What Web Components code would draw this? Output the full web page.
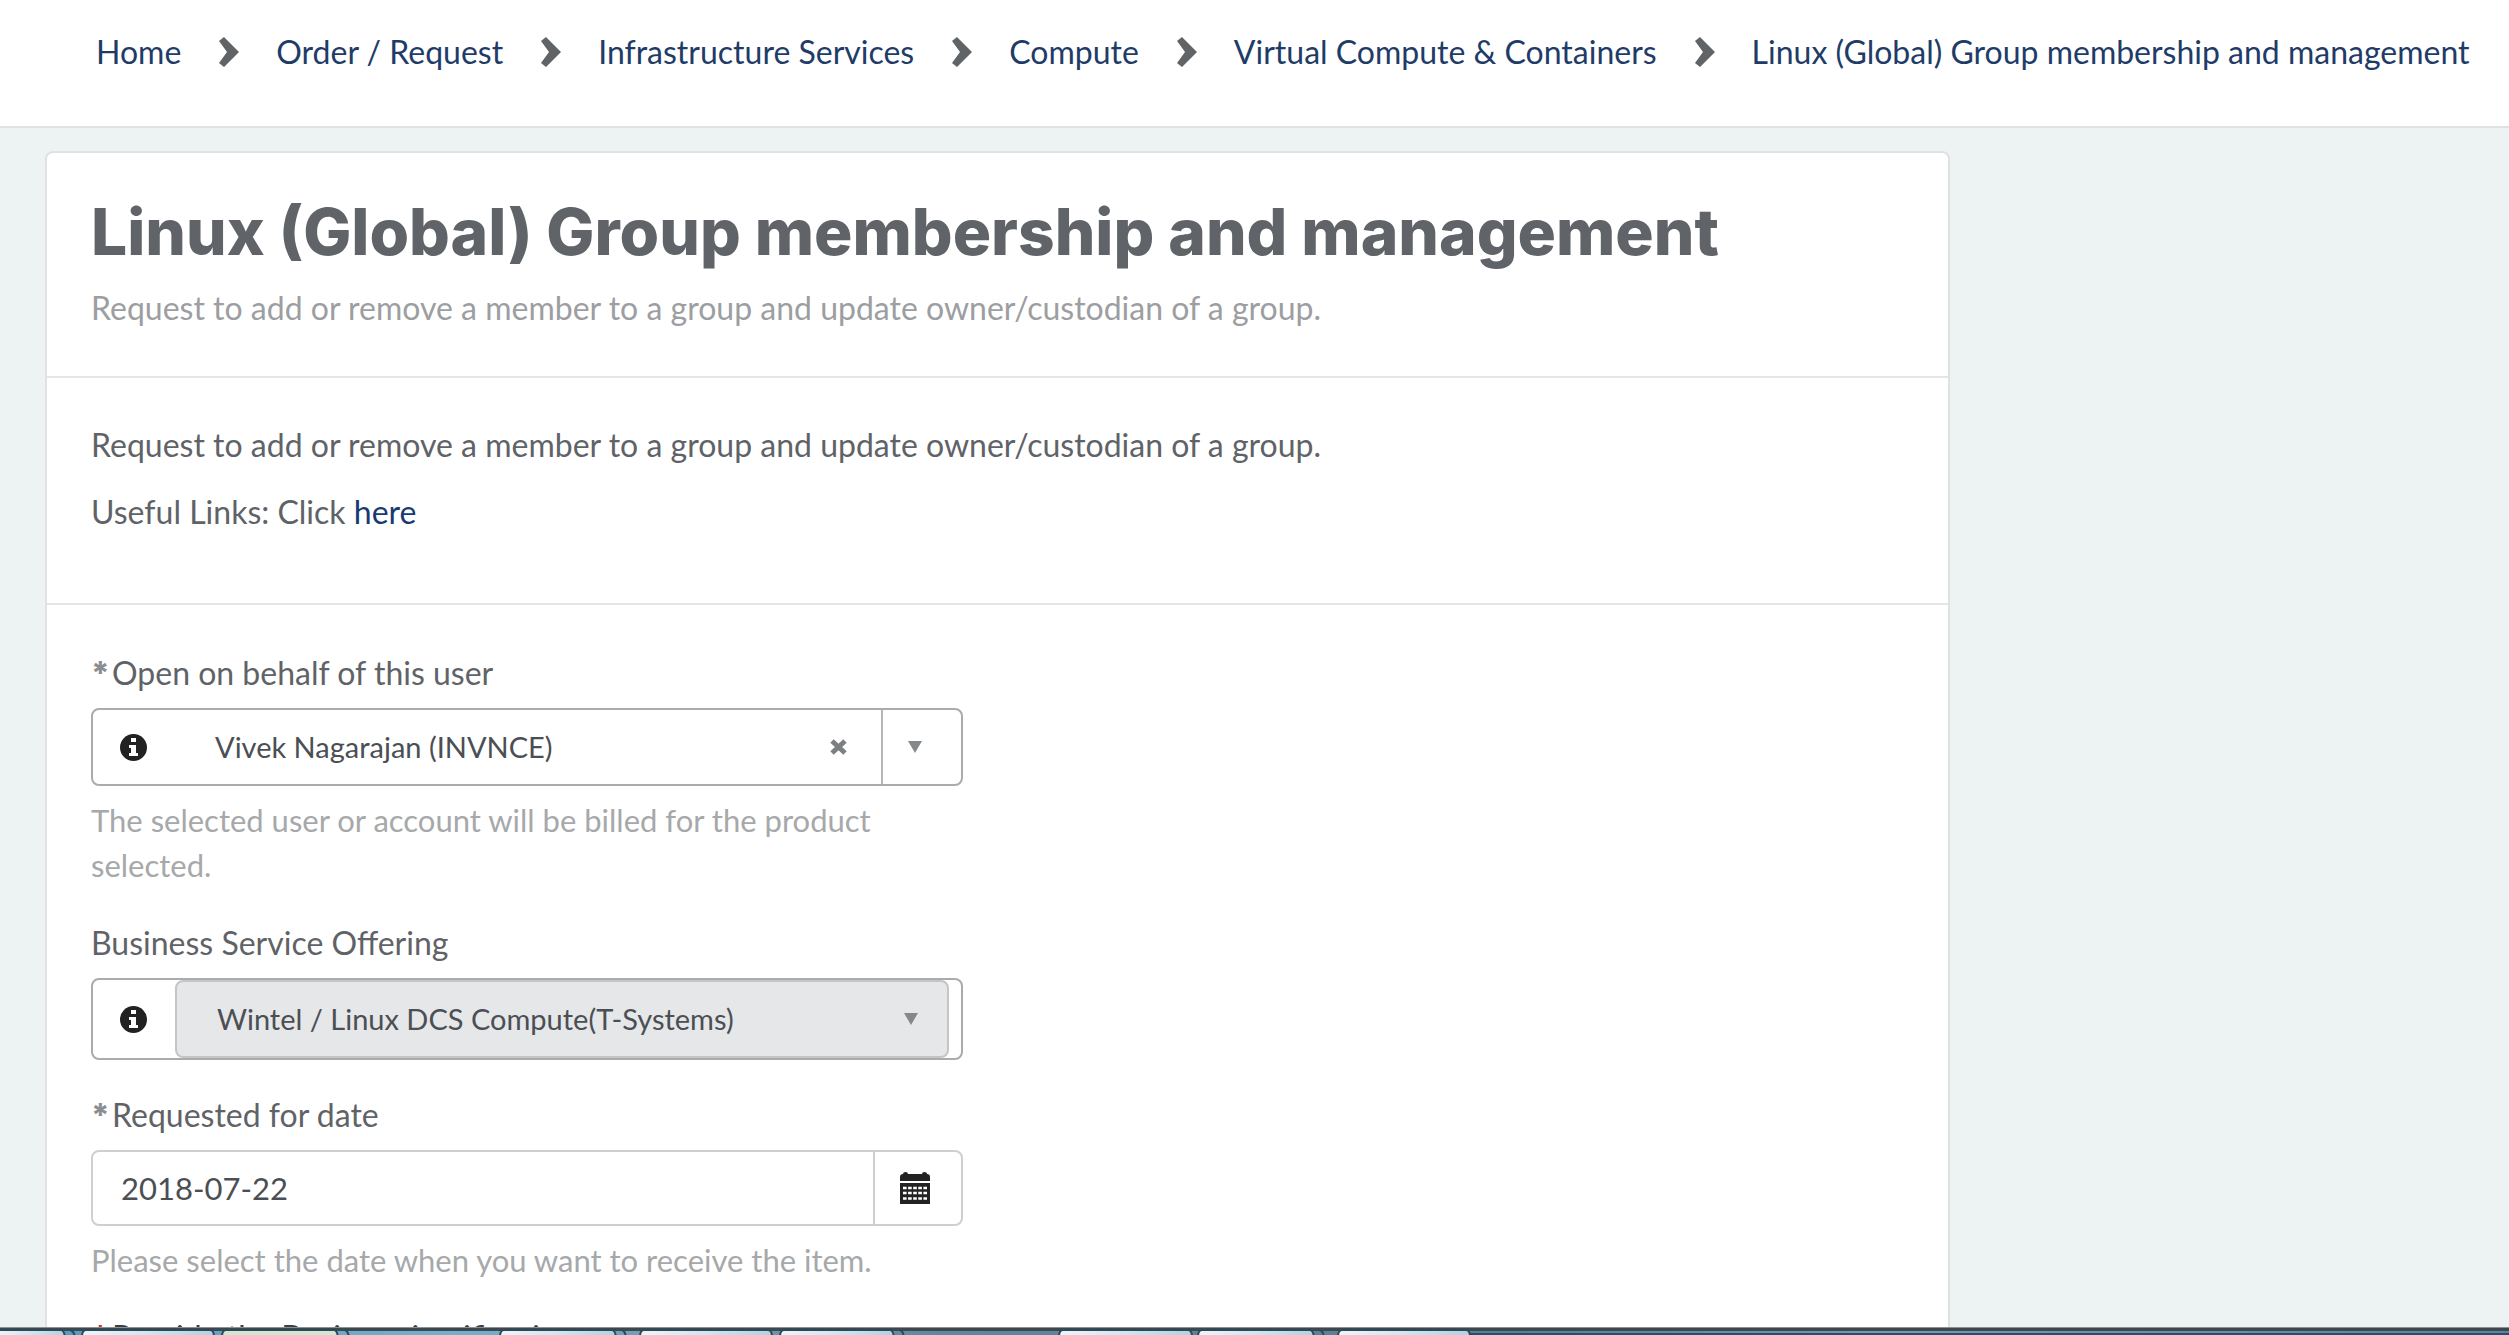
<!DOCTYPE html>
<html lang="en">
<head>
<meta charset="utf-8">
<title>Linux (Global) Group membership and management</title>
<style>
:root{--navy:#1f3c68;--text:#5f6368;--muted:#9c9ea1;--line:#dfe1e2;--page:#edf2f3}
html,body{margin:0;height:100%}
body{font-family:Lato,"Liberation Sans",sans-serif;font-size:32px;line-height:45px;color:var(--text);background:var(--page)}
</style>
</head>
<body>
<portal-page>
  <bread-crumbs slot="top">
    <crumb-link>Home</crumb-link>
    <crumb-link>Order / Request</crumb-link>
    <crumb-link>Infrastructure Services</crumb-link>
    <crumb-link>Compute</crumb-link>
    <crumb-link>Virtual Compute &amp; Containers</crumb-link>
    <crumb-link>Linux (Global) Group membership and management</crumb-link>
  </bread-crumbs>
  <catalog-card heading="Linux (Global) Group membership and management" summary="Request to add or remove a member to a group and update owner/custodian of a group.">
    <item-description slot="description"></item-description>
    <reference-field label="Open on behalf of this user" value="Vivek Nagarajan (INVNCE)" help="The selected user or account will be billed for the product selected." required clearable></reference-field>
    <reference-field label="Business Service Offering" value="Wintel / Linux DCS Compute(T-Systems)" readonly></reference-field>
    <date-field label="Requested for date" value="2018-07-22" help="Please select the date when you want to receive the item."></date-field>
    <text-field label="Provide the Business justification"></text-field>
  </catalog-card>
  <task-bar slot="bottom"></task-bar>
</portal-page>
<script>
const define=(name,render)=>customElements.define(name,class extends HTMLElement{
  connectedCallback(){
    if(this.shadowRoot)return;
    this.attachShadow({mode:'open'}).innerHTML=render(this);
  }
});

define('portal-page',()=>`<style>
:host{display:grid;grid-template-rows:auto minmax(0,1fr) auto;height:100vh;overflow:hidden}
main{display:grid;grid-template-columns:3.41fr 1fr;padding:23px 0 0 45px;overflow:hidden}
</style>
<slot name="top"></slot><main><slot></slot></main><slot name="bottom"></slot>`);

define('bread-crumbs',()=>`<style>
:host{display:block;background:#fff;border-bottom:2px solid var(--line)}
nav{display:flex;align-items:center;gap:37px;padding:29px 32px 52px 96px;white-space:nowrap}
::slotted(crumb-link:first-child){--mark:none}
</style><nav aria-label="Breadcrumb"><slot></slot></nav>`);

define('crumb-link',()=>`<style>
:host{display:flex;align-items:center;gap:37px}
svg{display:var(--mark,block);width:21px;height:30px}
a{color:var(--navy);text-decoration:none}
</style><svg viewBox="0 0 21 30" aria-hidden="true"><path d="M1 4 6 0 21 15 6 30 1 26 9 15Z" fill="#606467"/></svg><a href="#"><slot></slot></a>`);

define('catalog-card',h=>`<style>
:host{display:block;min-width:0;background:#fff;border:2px solid var(--line);border-bottom:0;border-radius:8px 8px 0 0}
header,.info{padding:40px 44px;border-bottom:2px solid #e4e6e6}
header{padding-bottom:46px}
h1{margin:0;font-family:Inter,Lato,sans-serif;font-size:64px;line-height:78px;font-weight:800;color:#606469}
p{margin:14px 0 0;color:var(--muted)}
.form{display:grid;grid-template-columns:1fr 1fr;gap:0 70px;padding:45px 44px 0}
.fields{display:flex;flex-direction:column;min-width:0}
</style>
<header><h1>${h.getAttribute('heading')}</h1><p>${h.getAttribute('summary')}</p></header>
<div class="info"><slot name="description"></slot></div>
<div class="form"><div class="fields"><slot></slot></div></div>`);

define('item-description',()=>`<style>
:host{display:block;padding:4px 0 29px}
p{margin:0 0 22px}
p:last-child{margin:0}
a{color:#163a72;text-decoration:none}
</style><p>Request to add or remove a member to a group and update owner/custodian of a group.</p><p>Useful Links: Click <a href="#">here</a></p>`);

const fieldCss=`
:host{display:block;margin-bottom:32px}
label{display:block;margin-bottom:13px}
.req{display:inline-block;width:21px;font-family:Inter,Lato,sans-serif;font-size:32px;line-height:1px;font-weight:800;color:#8b8e91}
.box{display:flex;align-items:stretch;box-sizing:border-box;height:78px;border:2px solid #a9abad;border-radius:8px;background:#fff}
button{display:grid;place-items:center;margin:0;padding:0;border:0;background:none}
select,input{flex:1;min-width:0;margin:0;padding:0;border:0;outline:0;background:none;font:inherit;color:#4b4f54;appearance:none;opacity:1}
select{padding-bottom:2px;font-size:29px}
input{font-size:31px}
.help{margin:0;padding-top:12px;font-size:31px;color:#a6a8aa}
svg{display:block}`;
const infoIcon=`<svg width="27" height="27" viewBox="0 0 27 27" aria-hidden="true"><circle cx="13.500" cy="13.500" r="13.500" fill="#222"/><path d="M11 4h5v4h-5zM9 11h7v8h2v3H9v-3h2v-5H9z" fill="#fff"/></svg>`;
const caret=`<svg width="14" height="12" viewBox="0 0 14 12" aria-hidden="true"><path d="M0 0h14L7 12z" fill="#85888a"/></svg>`;

define('reference-field',h=>{
  const a=n=>h.getAttribute(n),ro=h.hasAttribute('readonly');
  return `<style>${fieldCss}
.info{width:80px}
select{padding-left:42px}
.clear{width:84px}
.open{width:80px;padding-right:14px;border-left:2px solid #b4b6b8}
:host([readonly]) .box{height:82px}
.inner{display:flex;flex:1;margin:0 12px 0 2px;background:#e5e7e9;border:2px solid #c3c5c7;border-radius:8px}
.inner select{padding-left:40px}
.inner .open{width:72px;border:0;padding:0}
</style>
<label for="ref">${h.hasAttribute('required')?'<span class="req">*</span>':''}${a('label')}</label>
<div class="box"><button class="info" type="button" aria-label="Show record details">${infoIcon}</button>
${ro?`<div class="inner"><select id="ref" disabled><option>${a('value')}</option></select><button class="open" type="button" disabled aria-label="Open list">${caret}</button></div>`
:`<select id="ref"><option>${a('value')}</option></select><button class="clear" type="button" aria-label="Clear"><svg width="17" height="16" viewBox="0 0 17 16" aria-hidden="true"><path d="m2 2 13 12M15 2 2 14" stroke="#7d8083" stroke-width="5"/></svg></button><button class="open" type="button" aria-label="Open list">${caret}</button>`}
</div>${a('help')?`<p class="help">${a('help')}</p>`:''}`;
});

define('date-field',h=>`<style>${fieldCss}
:host{margin-bottom:31px}
.box{height:76px;border-color:#cdcfd0}
input{padding-left:28px}
button{width:88px;padding-right:6px;border-left:2px solid #cdcfd0}
</style>
<label for="date"><span class="req">*</span>${h.getAttribute('label')}</label>
<div class="box"><input id="date" type="text" value="${h.getAttribute('value')}"><button type="button" aria-label="Pick a date">
<svg width="30" height="32" viewBox="0 0 30 32" aria-hidden="true"><path d="M3 2q0-2 2.500-2T8 2h14q0-2 2.500-2T27 2q3 0 3 3v4H0V5q0-3 3-3zM0 11h30v21H0z" fill="#222"/><path d="M3 16h24M3 21h24M3 26.500h24" stroke="#fff" stroke-width="2.500" stroke-dasharray="3.600 1.500"/></svg>
</button></div><p class="help">${h.getAttribute('help')}</p>`);

define('text-field',h=>`<style>${fieldCss}
.req{color:#d9372c}label{color:#3b3f44}
</style><label for="text"><span class="req">*</span>${h.getAttribute('label')}</label><div class="box"><input id="text" type="text"></div>`);

define('task-bar',()=>`<style>
:host{display:block;height:7px;border-top:1px solid #8c9193}
svg{display:block;width:100%;height:7px}
</style>
<svg viewBox="0 0 2509 7" preserveAspectRatio="none" aria-hidden="true">
<defs>
<linearGradient id="bar" x1="0" x2="1" y1="0" y2="0"><stop offset="0" stop-color="#4d9bc4"/><stop offset=".18" stop-color="#78aecd"/><stop offset=".38" stop-color="#6485a0"/><stop offset=".6" stop-color="#5b7c95"/><stop offset=".75" stop-color="#8296a6"/><stop offset="1" stop-color="#66809a"/></linearGradient>
<linearGradient id="tab" x1="0" x2="1" y1="0" y2="0"><stop offset="0" stop-color="#eef5fa"/><stop offset=".5" stop-color="#d2e5f0"/><stop offset="1" stop-color="#b4d0e2"/></linearGradient>
</defs>
<rect width="2509" height="7" fill="url(#bar)"/><rect x="1470" y="5" width="1039" height="2" fill="#234f76"/><rect width="2509" height="3" fill="#3b484e"/>
<g stroke="#2f4857" stroke-width="2" fill="url(#tab)">
<path d="M-5 9V2H61q3 0 4 7"/><path d="M82 9q0-7 4-7H210q4 0 4 7"/><path d="M222 9q0-7 4-7H334q3 0 4 7" fill="#d3e6d3"/><path d="M500 9q0-7 4-7H612q3 0 4 7"/><path d="M640 9q0-7 4-7H768q4 0 4 7"/><path d="M780 9q0-7 4-7H890q3 0 4 7"/><path d="M1059 9q0-7 4-7H1188q4 0 4 7"/><path d="M1198 9q0-7 4-7H1310q3 0 4 7"/><path d="M1338 9q0-7 4-7H1466q4 0 4 7"/>
<path d="M70 2q4 1 5 7M345 2q3 1 4 7M622 2q3 1 4 7M900 2q3 1 4 7M1320 2q3 1 4 7" fill="none"/>
</g>
</svg>`);
</script>
</body>
</html>
